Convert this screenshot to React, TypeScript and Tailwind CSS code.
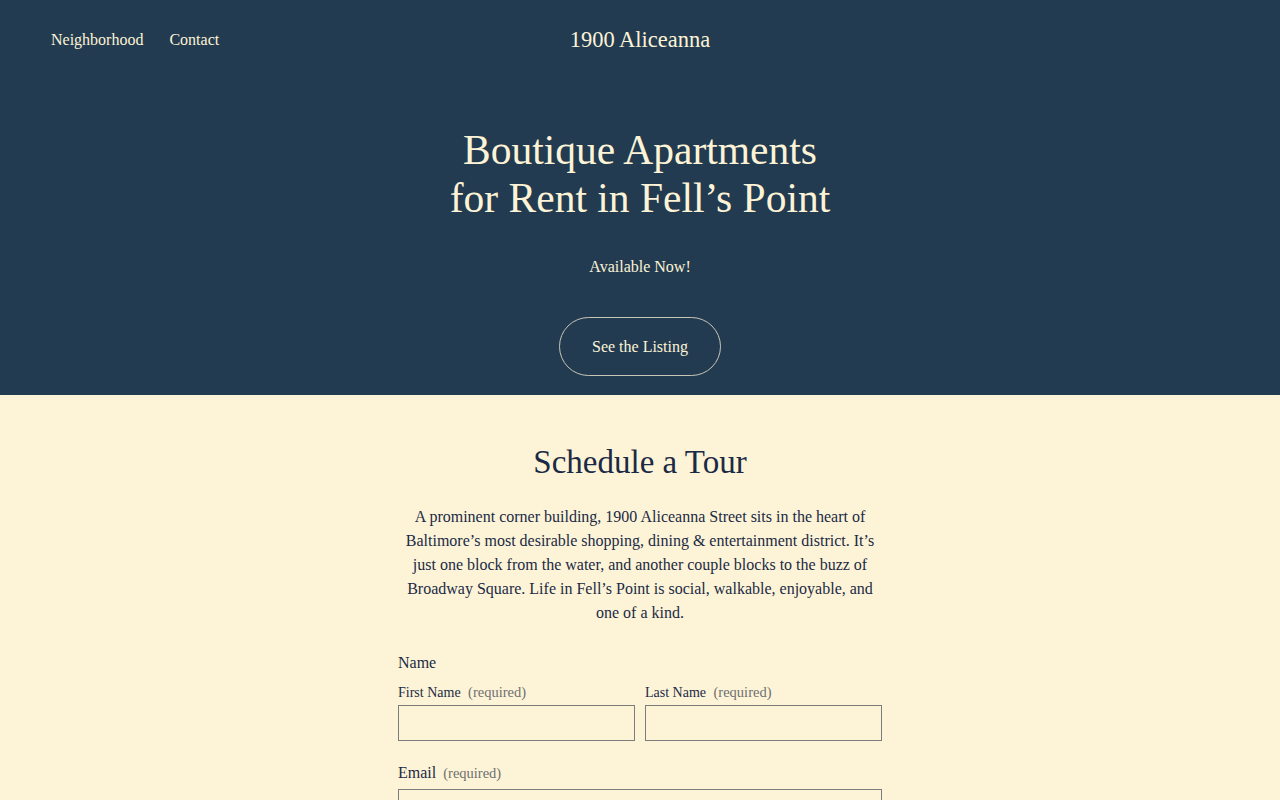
export default function App() {
  return (
    <div className="min-h-screen bg-[#fdf4d8] font-['Liberation_Serif','Times_New_Roman',serif]">
      {/* Hero */}
      <section className="bg-[#223b50] text-[#fdf3d7]">
        <header className="relative flex h-[80px] items-center px-[51px]">
          <nav className="flex gap-[26px] text-[16px]">
            <a href="#">Neighborhood</a>
            <a href="#">Contact</a>
          </nav>
          <div className="absolute left-1/2 -translate-x-1/2 text-[22.5px]">1900 Aliceanna</div>
        </header>
        <div className="flex flex-col items-center pb-[19px] pt-[46px] text-center">
          <h1 className="text-[41.5px] leading-[48px]">
            Boutique Apartments
            <br />
            for Rent in Fell’s Point
          </h1>
          <p className="mt-[33px] text-[16px]">Available Now!</p>
          <a
            href="#"
            className="mt-[38px] flex h-[59px] w-[162px] items-center justify-center rounded-full border border-[#c9c6b8] text-[16px]"
          >
            See the Listing
          </a>
        </div>
      </section>

      {/* Schedule a tour */}
      <section className="flex flex-col items-center pt-[45px] text-[#1b2a44]">
        <h2 className="text-[33px] leading-[44px]">Schedule a Tour</h2>
        <p className="mt-[21px] w-[484px] text-center text-[16px] leading-[24px]">
          A prominent corner building, 1900 Aliceanna Street sits in the heart of Baltimore’s most desirable shopping,
          dining &amp; entertainment district. It’s just one block from the water, and another couple blocks to the
          buzz of Broadway Square. Life in Fell’s Point is social, walkable, enjoyable, and one of a kind.
        </p>

        <form className="mt-[26px] w-[484px]">
          <div className="text-[16px]">Name</div>
          <div className="mt-[7px] grid grid-cols-2 gap-[10px]">
            <label className="flex flex-col">
              <span className="text-[14px]">
                First Name <span className="ml-[4px] text-[14.5px] text-[#6f6f6f]">(required)</span>
              </span>
              <input className="mt-[1px] h-[36px] border border-[#7c7c7c] bg-transparent px-2 outline-none" />
            </label>
            <label className="flex flex-col">
              <span className="text-[14px]">
                Last Name <span className="ml-[4px] text-[14.5px] text-[#6f6f6f]">(required)</span>
              </span>
              <input className="mt-[1px] h-[36px] border border-[#7c7c7c] bg-transparent px-2 outline-none" />
            </label>
          </div>
          <label className="mt-[20px] flex flex-col">
            <span className="text-[16px]">
              Email <span className="ml-[3px] text-[14.5px] text-[#6f6f6f]">(required)</span>
            </span>
            <input className="mt-[4px] h-[36px] border border-[#7c7c7c] bg-transparent px-2 outline-none" />
          </label>
          <div className="h-[40px]" />
        </form>
      </section>
    </div>
  )
}
